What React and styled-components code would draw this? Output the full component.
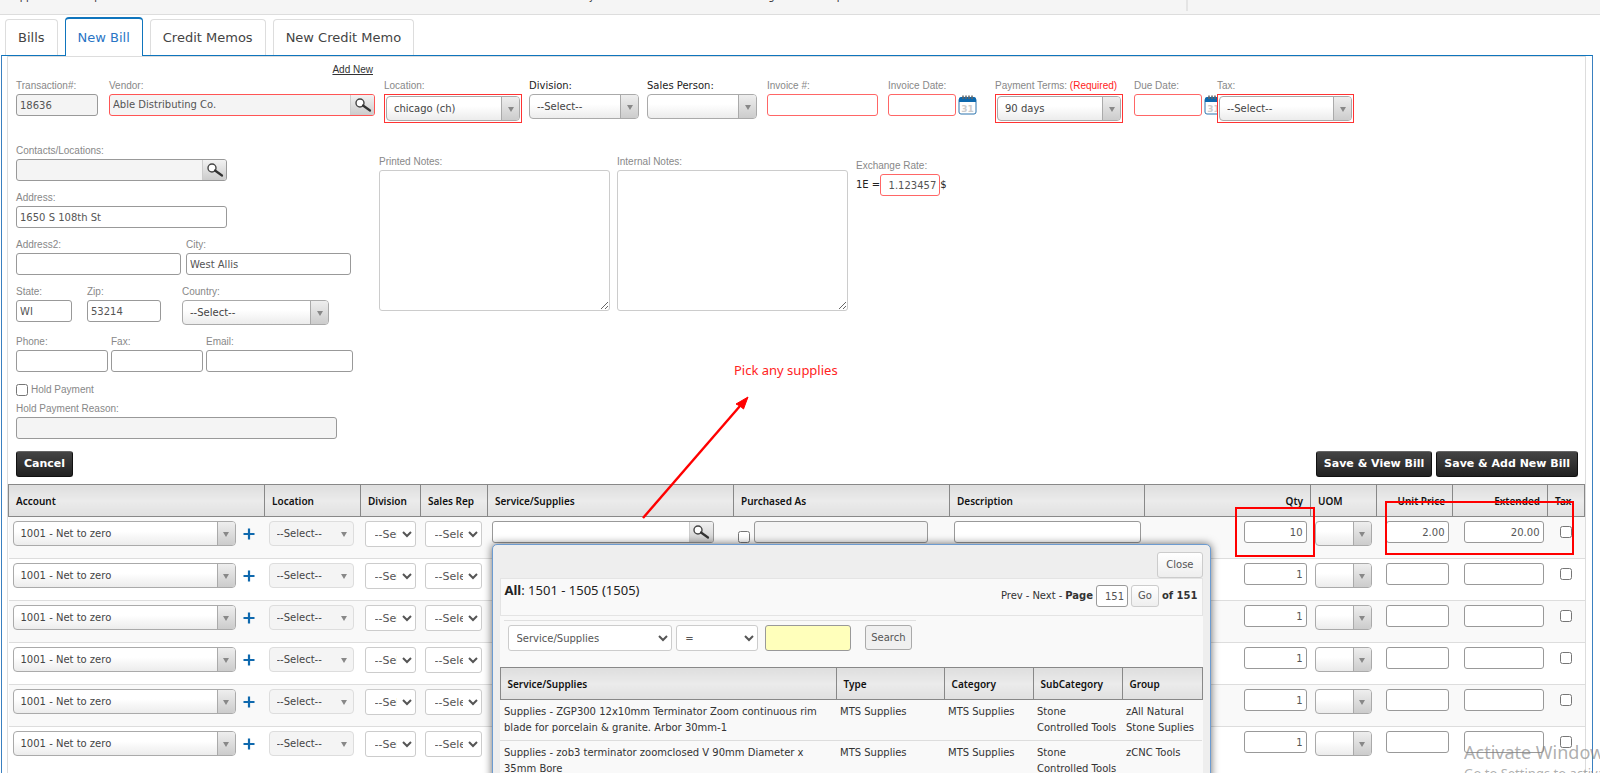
import React, { useId, useState } from 'react';
import styled, { createGlobalStyle, css } from 'styled-components';

const sans = '"DejaVu Sans", Verdana, sans-serif';
const arial = '"Liberation Sans", Arial, sans-serif';
const noto = '"Noto Sans", "Open Sans", sans-serif';

const GlobalStyle = createGlobalStyle`
    * { box-sizing: border-box; }
    body {
        margin: 0;
        background: #fff;
        color: #222;
        font: 10px/14px ${sans};
    }
    button, input, select, textarea {
        margin: 0;
        font: inherit;
        color: #555;
    }
`;

const Page = styled.div`
    position: relative;
    display: flex;
    flex-direction: column;
    height: 100vh;
    overflow: hidden;
`;

const TopBar = styled.nav`
    display: flex;
    flex: none;
    height: 15px;
    padding-left: 7px;
    overflow: hidden;
    background: #f5f5f5;
    border-bottom: 1px solid #ddd;
`;

const TopItem = styled.a`
    width: ${p => p.$w}px;
    height: 21px;
    margin-top: -10px;
    color: #333;
    text-decoration: none;
    ${p => p.$last && 'border-right: 2px solid #e4e4e4;'}
`;

const Tabs = styled.div`
    display: flex;
    flex: none;
    align-items: flex-end;
    gap: 7px;
    height: 40px;
    padding-left: 5px;
`;

const Tab = styled.button`
    height: 36px;
    padding: 0 12px;
    background: #fff;
    border: 1px solid #ddd;
    border-bottom: 0;
    border-radius: 4px 4px 0 0;
    font-size: 13px;
    color: #444;
    cursor: pointer;
    ${p => p.$active && css`
        position: relative;
        height: 39px;
        margin-bottom: -1px;
        border-color: #0f75bd;
        border-top: 2px solid #0f75bd;
        color: #2a75c5;
    `}
`;

const Panel = styled.main`
    display: flex;
    flex: 1;
    min-height: 0;
    margin: 0 7px 0 1px;
    padding: 0 6px 0 5px;
    border: 1px solid #3a80c0;
    border-top-color: #0f75bd;
    border-bottom: 0;
`;

const Form = styled.form`
    flex: 1;
    min-width: 0;
    border: 1px solid #ddd;
    border-bottom: 0;
`;

const TopFields = styled.div`
    display: grid;
    grid-template-columns: 93px 275px 145px 118px 120px 121px 107px 139px 83px 137px;
    padding: 5px 8px 0;
`;

const VendorCell = styled.div`
    margin-right: 9px;
`;

const AddNew = styled.a`
    display: block;
    width: 264px;
    text-align: right;
    font-family: ${arial};
    color: #333;
    height: 18px;
    line-height: 16px;
`;

const FieldBox = styled.div`
    position: relative;
    display: flex;
    flex-direction: column;
    gap: 2px;
    width: ${p => (p.$w ? p.$w + 'px' : 'auto')};
    padding-top: ${p => (p.$top ? 18 : 0)}px;
`;

const Label = styled.label`
    font: 10px/12px ${arial};
    color: #888;
    white-space: nowrap;
    ${p => p.$dark && css`
        font-family: ${sans};
        color: #222;
    `}
    b {
        font-weight: 400;
        color: #f22;
    }
`;

const Input = styled.input`
    width: ${p => (p.$w ? p.$w + 'px' : '100%')};
    height: 22px;
    padding: 0 3px;
    background: ${p => (p.readOnly ? '#f4f4f4' : '#fff')};
    border: 1px solid ${p => (p.$required ? '#f66' : '#999')};
    border-radius: 3px;
    text-align: ${p => (p.$right ? 'right' : 'left')};
    ${p => p.$yellow && 'height: 26px; background: #ffffbb;'}
`;

const SearchBox = styled.div`
    position: relative;
    display: flex;
    width: ${p => p.$w}px;
    height: 22px;
    background: ${p => (p.$white ? '#fff' : '#f4f4f4')};
    border: 1px solid ${p => (p.$required ? '#f55' : '#999')};
    border-radius: 3px;
    input {
        flex: 1;
        min-width: 0;
        padding: 0 3px;
        background: none;
        border: 0;
    }
`;

const SearchButton = styled.button`
    width: 24px;
    padding: 0;
    background: linear-gradient(#f2f2f2, #ccc);
    border: 0;
    border-left: 1px solid #ccc;
    border-radius: 0 2px 2px 0;
    line-height: 0;
`;

const Combo = styled.div`
    display: flex;
    width: ${p => p.$w}px;
    height: 25px;
    overflow: hidden;
    background: linear-gradient(#fff 40%, #ececec);
    border: 1px solid #aaa;
    border-radius: 4px;
    select {
        flex: 1;
        min-width: 0;
        padding: 0 0 0 7px;
        appearance: none;
        background: none;
        border: 0;
        outline: 0;
        color: #444;
        opacity: 1;
    }
    ${p => p.$disabled && css`
        background: #f4f4f4;
        border-color: #ddd;
    `}
`;

const RequiredFrame = styled.div`
    padding: 1px;
    background: #fff;
    border: 1px solid #f33;
`;

const Arrow = styled.span`
    display: flex;
    align-items: center;
    justify-content: center;
    width: 18px;
    padding-top: 2px;
    background: linear-gradient(#eee, #ccc);
    border-left: 1px solid #aaa;
    pointer-events: none;
    ${p => p.$disabled && css`
        background: none;
        border-color: transparent;
    `}
    &::after {
        content: '';
        border: 3px solid transparent;
        border-top: 5px solid #888;
        border-bottom: 0;
    }
`;

const PlainSelect = styled.select`
    width: ${p => p.$w}px;
    height: 26px;
    padding: 0 0 0 4px;
    background: #fff;
    border: 1px solid #ccc;
    border-radius: 3px;
    ${p => p.$cell && css`
        padding: 0 2px 0 5px;
        font-size: 11px;
    `}
`;

const DateRow = styled.div`
    display: flex;
    align-items: center;
    gap: 2px;
    button {
        flex: none;
        height: 20px;
        padding: 0;
        background: none;
        border: 0;
    }
`;

const Columns = styled.div`
    display: flex;
    gap: 8px;
    padding: 22px 8px 0;
`;

const AddressColumn = styled.div`
    display: flex;
    flex-direction: column;
    gap: 11px;
    width: 355px;
`;

const FieldRow = styled.div`
    display: flex;
    gap: ${p => p.$gap}px;
`;

const RegionRow = styled.div`
    display: grid;
    grid-template-columns: 71px 95px auto;
`;

const HoldGroup = styled.div`
    display: flex;
    flex-direction: column;
    gap: 6px;
`;

const CheckLine = styled.div`
    display: flex;
    align-items: center;
    gap: 3px;
    height: 14px;
`;

const Check = styled.input.attrs({ type: 'checkbox' })`
    flex: none;
    width: 12px;
    height: 12px;
`;

const Notes = styled.div`
    display: flex;
    gap: 7px;
    padding-top: 11px;
`;

const TextArea = styled.textarea`
    width: 231px;
    height: 141px;
    border: 1px solid #ccc;
    border-radius: 3px;
    resize: both;
`;

const Rate = styled.div`
    display: flex;
    flex-direction: column;
    gap: 2px;
    padding-top: 15px;
    div {
        display: flex;
        align-items: center;
    }
`;

const Actions = styled.div`
    display: flex;
    gap: 4px;
    padding: 12px 7px 7px 8px;
`;

const DarkButton = styled.button`
    height: 26px;
    padding: 0 7px;
    background: linear-gradient(#444, #222);
    border: 1px solid #111;
    border-top-color: #666;
    border-radius: 3px;
    font: bold 11px/16px ${sans};
    color: #fff;
    ${p => p.$left && 'margin-right: auto;'}
`;

const Table = styled.table`
    width: 100%;
    table-layout: fixed;
    border-collapse: collapse;
`;

const Th = styled.th`
    height: 32px;
    padding: 0 7px;
    background: linear-gradient(#dedede, #ebebeb 50%, #e0e0e0);
    border: 1px solid #888;
    font: 600 10px/14px ${noto};
    color: #111;
    white-space: nowrap;
    text-align: ${p => (p.$right ? 'right' : 'left')};
`;

const Row = styled.tr`
    height: 42px;
    background: #fff;
    &:nth-child(odd) {
        background: #f9f9f9;
    }
    & + & {
        border-top: 1px solid #ddd;
    }
`;

const Td = styled.td`
    padding: 4px 4px 0;
    vertical-align: top;
    text-align: ${p => (p.$right ? 'right' : 'left')};
`;

const CellLine = styled.div`
    position: relative;
    display: flex;
    align-items: ${p => (p.$end ? 'flex-end' : 'center')};
    gap: ${p => p.$gap || 0}px;
    min-height: 22px;
    ${p => p.$center && 'justify-content: center;'}
`;

const PlusButton = styled.button`
    padding: 0;
    background: none;
    border: 0;
    line-height: 0;
`;

const Popup = styled.section`
    position: absolute;
    z-index: 5;
    top: 23px;
    left: 0;
    width: 719px;
    padding: 7px 7px 20px;
    background: #eee;
    border: 1px solid #6c9bd0;
    border-radius: 5px;
    box-shadow: 0 0 8px rgba(0, 0, 0, 0.6);
    color: #333;
`;

const PopupButton = styled.button`
    height: ${p => (p.$small ? 22 : 26)}px;
    padding: 0 ${p => (p.$small ? 6 : 8)}px;
    background: linear-gradient(#fff, #eee);
    border: 1px solid #ccc;
    border-radius: 3px;
    ${p => p.$flat && css`
        height: 25px;
        padding: 0 5px;
        background: #f0f0f0;
        border-color: #aaa;
    `}
`;

const PopupTop = styled.div`
    display: flex;
    justify-content: flex-end;
`;

const PopupBody = styled.div`
    background: #f9f9f9;
`;

const PopupTitle = styled.div`
    display: flex;
    justify-content: space-between;
    height: 38px;
    padding: 4px 4px 0;
    border: 1px solid #e4e4e4;
    h2 {
        margin: 0;
        font: 13px/14px ${noto};
        color: #222;
    }
`;

const Pager = styled.div`
    display: flex;
    align-items: center;
    gap: 3px;
    height: 26px;
    a {
        color: #333;
        text-decoration: none;
    }
`;

const Filter = styled.div`
    display: flex;
    gap: 4px;
    width: 412px;
    margin: 4px 0 0 4px;
    padding: 4px 4px 16px;
    border-top: 1px solid #e0e0e0;
    > input {
        margin: 0 10px 0 3px;
    }
`;

const ResultCell = styled.td`
    height: 41px;
    padding: 4px;
    border-bottom: 1px solid #ddd;
    line-height: 16px;
    vertical-align: top;
`;

const Callout = styled.div`
    position: absolute;
    z-index: 6;
    top: ${p => p.$y}px;
    left: ${p => p.$x}px;
    width: ${p => p.$w}px;
    height: ${p => p.$h}px;
    border: 2px solid #f00;
    pointer-events: none;
`;

const CalloutText = styled.div`
    position: absolute;
    top: 361px;
    left: 734px;
    font: 13px/18px ${noto};
    color: #f22;
`;

const ArrowDrawing = styled.svg`
    position: absolute;
    z-index: 6;
    top: 390px;
    left: 636px;
    pointer-events: none;
`;

const Watermark = styled.div`
    position: absolute;
    z-index: 7;
    top: 740px;
    left: 1464px;
    right: 0;
    overflow: hidden;
    white-space: nowrap;
    font: 13px/18px ${noto};
    color: rgba(130, 130, 130, 0.65);
    pointer-events: none;
    strong {
        display: block;
        font-weight: 400;
        font-size: 18px;
        line-height: 24px;
    }
`;

const SearchIcon = () => (
    <svg width="20" height="18" viewBox="0 0 20 18" fill="none" aria-hidden="true">
        <circle cx="7" cy="7" r="4" fill="#fff" stroke="#444" strokeWidth="1.4" />
        <path d="M10 9.5 L17 14.5" stroke="#333" strokeWidth="2.2" strokeLinecap="round" />
    </svg>
);

const CalendarIcon = () => (
    <svg width="19" height="20" viewBox="0 0 19 20" aria-hidden="true">
        <rect x="1" y="3" width="17" height="16" rx="2" fill="#fff" stroke="#2b73ad" />
        <path d="M1 7 V4 Q1 2 3 2 H16 Q18 2 18 4 V7 Z" fill="#0d68ad" />
        <path d="M5 0.5 V4 M8 0.5 V4 M11 0.5 V4 M14 0.5 V4" stroke="#666" strokeWidth="1.5" />
        <text x="9.5" y="17" textAnchor="middle" fontFamily="DejaVu Sans" fontWeight="bold" fontSize="9" fill="#ccc">31</text>
    </svg>
);

const PlusIcon = () => (
    <svg width="12" height="12" viewBox="0 0 12 12" aria-hidden="true">
        <path d="M6 0.5 V11.5 M0.5 6 H11.5" stroke="#0f69ae" strokeWidth="2.2" />
    </svg>
);

const ComboBox = ({ id, w, value = '', label, disabled, required }) => {
    const combo = (
        <Combo $w={required ? w - 4 : w} $disabled={disabled}>
            <select id={id} aria-label={label} disabled={disabled}>
                <option>{value}</option>
            </select>
            <Arrow $disabled={disabled} />
        </Combo>
    );
    return required ? <RequiredFrame>{combo}</RequiredFrame> : combo;
};

const Search = ({ id, w, value = '', label, required, white }) => (
    <SearchBox $w={w} $required={required} $white={white}>
        <input id={id} aria-label={label} defaultValue={value} />
        <SearchButton type="button" aria-label="Search"><SearchIcon /></SearchButton>
    </SearchBox>
);

const Field = ({ label, note, w, type = 'text', value = '', top, dark, required, readOnly }) => {
    const id = useId();
    return (
        <FieldBox $w={w} $top={top}>
            <Label htmlFor={id} $dark={dark}>{label}{note && <b> {note}</b>}</Label>
            {type === 'text' && <Input id={id} defaultValue={value} readOnly={readOnly} $required={required} />}
            {type === 'combo' && <ComboBox id={id} w={w} value={value} required={required} />}
            {type === 'search' && <Search id={id} w={w} value={value} required={required} />}
            {type === 'notes' && <TextArea id={id} />}
            {type === 'date' && (
                <DateRow>
                    <Input id={id} $w={w} $required={required} />
                    <button type="button" aria-label="Open calendar"><CalendarIcon /></button>
                </DateRow>
            )}
        </FieldBox>
    );
};

const results = [
    {
        name: 'Supplies - ZGP300 12x10mm Terminator Zoom continuous rim blade for porcelain & granite. Arbor 30mm-1',
        group: 'zAll Natural Stone Suplies'
    },
    {
        name: 'Supplies - zob3 terminator zoomclosed V 90mm Diameter x 35mm Bore',
        group: 'zCNC Tools'
    }
];

const SuppliesPopup = ({ close }) => (
    <Popup>
        <PopupTop><PopupButton type="button" onClick={close}>Close</PopupButton></PopupTop>
        <PopupBody>
            <PopupTitle>
                <h2><b>All</b>: 1501 - 1505 (1505)</h2>
                <Pager>
                    <a href="#prev">Prev</a> - <a href="#next">Next</a> - <b>Page</b>
                    <Input $w={32} $right defaultValue="151" aria-label="Page" />
                    <PopupButton type="button" $small>Go</PopupButton>
                    <b>of 151</b>
                </Pager>
            </PopupTitle>
            <Filter>
                <PlainSelect $w={165} aria-label="Filter field"><option>Service/Supplies</option></PlainSelect>
                <PlainSelect $w={82} aria-label="Filter operator"><option>=</option></PlainSelect>
                <Input $w={86} $yellow aria-label="Filter value" />
                <PopupButton type="button" $flat>Search</PopupButton>
            </Filter>
            <Table>
                <colgroup>
                    <col />
                    <col width="108" />
                    <col width="89" />
                    <col width="89" />
                    <col width="80" />
                </colgroup>
                <thead>
                    <tr>
                        <Th>Service/Supplies</Th>
                        <Th>Type</Th>
                        <Th>Category</Th>
                        <Th>SubCategory</Th>
                        <Th>Group</Th>
                    </tr>
                </thead>
                <tbody>
                    {results.map(item => (
                        <tr key={item.name}>
                            <ResultCell>{item.name}</ResultCell>
                            <ResultCell>MTS Supplies</ResultCell>
                            <ResultCell>MTS Supplies</ResultCell>
                            <ResultCell>Stone Controlled Tools</ResultCell>
                            <ResultCell>{item.group}</ResultCell>
                        </tr>
                    ))}
                </tbody>
            </Table>
        </PopupBody>
    </Popup>
);

const items = [
    { qty: '10', price: '2.00', extended: '20.00' },
    { qty: '1' },
    { qty: '1' },
    { qty: '1' },
    { qty: '1' },
    { qty: '1' }
];

const ItemRow = ({ item, popup }) => (
    <Row>
        <Td>
            <CellLine $gap={7}>
                <ComboBox w={223} value="1001 - Net to zero" label="Account" />
                <PlusButton type="button" aria-label="Add account"><PlusIcon /></PlusButton>
            </CellLine>
        </Td>
        <Td><ComboBox w={85} value="--Select--" label="Location" disabled /></Td>
        <Td><PlainSelect $w={51} $cell aria-label="Division"><option>--Select--</option></PlainSelect></Td>
        <Td><PlainSelect $w={57} $cell aria-label="Sales Rep"><option>--Select--</option></PlainSelect></Td>
        <Td>
            <CellLine>
                <Search w={222} label="Service/Supplies" white />
                {popup}
            </CellLine>
        </Td>
        <Td>
            <CellLine $gap={4} $end>
                <Check aria-label="Purchased as" />
                <Input $w={174} readOnly aria-label="Purchased as name" />
            </CellLine>
        </Td>
        <Td><Input $w={187} aria-label="Description" /></Td>
        <Td $right><Input $w={63} $right defaultValue={item.qty} aria-label="Qty" /></Td>
        <Td><ComboBox w={57} label="UOM" /></Td>
        <Td $right><Input $w={63} $right defaultValue={item.price} aria-label="Unit Price" /></Td>
        <Td $right><Input $w={80} $right defaultValue={item.extended} aria-label="Extended" /></Td>
        <Td><CellLine $center><Check aria-label="Tax" /></CellLine></Td>
    </Row>
);

const ItemsTable = () => {
    const [open, setOpen] = useState(true);

    return (
        <Table>
            <colgroup>
                <col width="256" />
                <col width="96" />
                <col width="60" />
                <col width="67" />
                <col width="246" />
                <col width="216" />
                <col />
                <col width="166" />
                <col width="66" />
                <col width="76" />
                <col width="95" />
                <col width="37" />
            </colgroup>
            <thead>
                <tr>
                    <Th>Account</Th>
                    <Th>Location</Th>
                    <Th>Division</Th>
                    <Th>Sales Rep</Th>
                    <Th>Service/Supplies</Th>
                    <Th>Purchased As</Th>
                    <Th>Description</Th>
                    <Th $right>Qty</Th>
                    <Th>UOM</Th>
                    <Th $right>Unit Price</Th>
                    <Th $right>Extended</Th>
                    <Th>Tax</Th>
                </tr>
            </thead>
            <tbody>
                {items.map((item, i) => (
                    <ItemRow
                        key={i}
                        item={item}
                        popup={i === 0 && open && <SuppliesPopup close={() => setOpen(false)} />}
                    />
                ))}
            </tbody>
        </Table>
    );
};

const tabs = ['Bills', 'New Bill', 'Credit Memos', 'New Credit Memo'];

const App = () => {
    const [active, setActive] = useState('New Bill');

    return (
        <Page>
            <GlobalStyle />
            <TopBar>
                <TopItem href="#supplies" $w={540}>Supplies workshop</TopItem>
                <TopItem href="#inventory" $w={194}>Inventory</TopItem>
                <TopItem href="#pricing" $w={73}>Pricing</TopItem>
                <TopItem href="#setup" $w={374} $last>Setup</TopItem>
            </TopBar>
            <Tabs>
                {tabs.map(tab => (
                    <Tab key={tab} type="button" $active={tab === active} onClick={() => setActive(tab)}>{tab}</Tab>
                ))}
            </Tabs>
            <Panel>
                <Form onSubmit={e => e.preventDefault()}>
                    <TopFields>
                        <Field label="Transaction#:" w={82} value="18636" readOnly top />
                        <VendorCell>
                            <AddNew href="#add">Add New</AddNew>
                            <Field label="Vendor:" type="search" w={266} value="Able Distributing Co." required />
                        </VendorCell>
                        <Field label="Location:" type="combo" w={138} value="chicago (ch)" required top />
                        <Field label="Division:" type="combo" w={110} value="--Select--" dark top />
                        <Field label="Sales Person:" type="combo" w={110} dark top />
                        <Field label="Invoice #:" w={111} required top />
                        <Field label="Invoice Date:" type="date" w={68} required top />
                        <Field label="Payment Terms:" note="(Required)" type="combo" w={128} value="90 days" required top />
                        <Field label="Due Date:" type="date" w={68} required top />
                        <Field label="Tax:" type="combo" w={137} value="--Select--" required top />
                    </TopFields>
                    <Columns>
                        <AddressColumn>
                            <Field label="Contacts/Locations:" type="search" w={211} />
                            <Field label="Address:" w={211} value="1650 S 108th St" />
                            <FieldRow $gap={5}>
                                <Field label="Address2:" w={165} />
                                <Field label="City:" w={165} value="West Allis" />
                            </FieldRow>
                            <RegionRow>
                                <Field label="State:" w={56} value="WI" />
                                <Field label="Zip:" w={74} value="53214" />
                                <Field label="Country:" type="combo" w={147} value="--Select--" />
                            </RegionRow>
                            <FieldRow $gap={3}>
                                <Field label="Phone:" w={92} />
                                <Field label="Fax:" w={92} />
                                <Field label="Email:" w={147} />
                            </FieldRow>
                            <HoldGroup>
                                <CheckLine>
                                    <Check id="hold-payment" />
                                    <Label htmlFor="hold-payment">Hold Payment</Label>
                                </CheckLine>
                                <Field label="Hold Payment Reason:" w={321} readOnly />
                            </HoldGroup>
                        </AddressColumn>
                        <Notes>
                            <Field label="Printed Notes:" type="notes" w={231} />
                            <Field label="Internal Notes:" type="notes" w={231} />
                        </Notes>
                        <Rate>
                            <Label htmlFor="exchange-rate">Exchange Rate:</Label>
                            <div>
                                1E =
                                <Input id="exchange-rate" $w={60} $right $required defaultValue="1.123457" />
                                $
                            </div>
                        </Rate>
                    </Columns>
                    <Actions>
                        <DarkButton type="button" $left>Cancel</DarkButton>
                        <DarkButton type="submit">Save &amp; View Bill</DarkButton>
                        <DarkButton type="submit">Save &amp; Add New Bill</DarkButton>
                    </Actions>
                    <ItemsTable />
                </Form>
            </Panel>
            <CalloutText>Pick any supplies</CalloutText>
            <ArrowDrawing width="120" height="134" viewBox="0 0 120 134" aria-hidden="true">
                <path d="M7 128 L104 16" stroke="#f00" strokeWidth="2.4" fill="none" />
                <path d="M112 7 L107.500 19 L104 16 L100 14 Z" fill="#f00" stroke="#f00" />
            </ArrowDrawing>
            <Callout $x={1235} $y={507} $w={80} $h={50} />
            <Callout $x={1385} $y={501} $w={189} $h={54} />
            <Watermark>
                <strong>Activate Windows</strong>
                Go to Settings to activate Windows.
            </Watermark>
        </Page>
    );
};

export default App;
